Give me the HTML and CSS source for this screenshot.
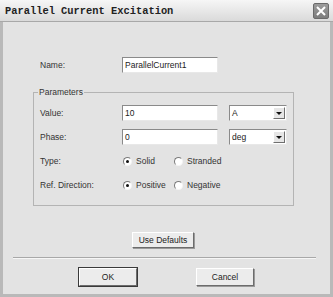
FILE: index.html
```html
<!DOCTYPE html>
<html>
<head>
    <title>Parallel Current Excitation</title>
    <link rel="stylesheet" href="styles.css">
</head>
<body>
    <div class="window">
        <div class="titlebar">
            <span class="title">Parallel Current Excitation</span>
            <span class="close">
                <svg width="10" height="10" viewBox="0 0 10 10">
                    <path d="M1 1 L9 9 M9 1 L1 9" stroke="#ffffff" stroke-width="2"/>
                </svg>
            </span>
        </div>
        <div class="content">
            <div class="row name-row">
                <span class="label">Name:</span>
                <div class="field">ParallelCurrent1</div>
            </div>
            <fieldset class="group">
                <legend>Parameters</legend>
                <div class="row">
                    <span class="label">Value:</span>
                    <div class="field">10</div>
                    <div class="combo"><span>A</span><span class="drop"></span></div>
                </div>
                <div class="row">
                    <span class="label">Phase:</span>
                    <div class="field">0</div>
                    <div class="combo"><span>deg</span><span class="drop"></span></div>
                </div>
                <div class="row">
                    <span class="label">Type:</span>
                    <span class="option"><span class="radio checked"></span>Solid</span>
                    <span class="option"><span class="radio"></span>Stranded</span>
                </div>
                <div class="row">
                    <span class="label">Ref. Direction:</span>
                    <span class="option"><span class="radio checked"></span>Positive</span>
                    <span class="option"><span class="radio"></span>Negative</span>
                </div>
            </fieldset>
            <div class="defaults">
                <div class="btn small">Use Defaults</div>
            </div>
            <div class="separator"></div>
            <div class="buttons">
                <div class="btn default">OK</div>
                <div class="btn">Cancel</div>
            </div>
        </div>
    </div>
</body>
</html>
```

FILE: styles.css
```css
body {
    margin: 0;
    background-color: #e3e3e3;
    font-family: "Liberation Sans", Arial, sans-serif;
    font-size: 8.5px;
    color: #333333;
}
.window {
    width: 333px;
    height: 297px;
    box-sizing: border-box;
    display: flex;
    flex-direction: column;
    background-color: #e3e3e3;
    border: 3px solid #b9b9b9;
    border-top: none;
}
.titlebar {
    height: 22px;
    margin: 0 -3px;
    box-sizing: border-box;
    display: flex;
    align-items: center;
    justify-content: space-between;
    padding: 0 4px 0 5px;
    background: linear-gradient(#f6f6f6, #dadada);
    border-bottom: 1px solid #a8a8a8;
}
.title {
    font-family: "Liberation Mono", "Courier New", monospace;
    font-weight: bold;
    font-size: 10.4px;
    color: #222222;
}
.close {
    width: 16px;
    height: 16px;
    box-sizing: border-box;
    display: flex;
    align-items: center;
    justify-content: center;
    background: linear-gradient(#9c9c9c, #7c7c7c);
    border: 1px solid #6a6a6a;
    border-radius: 2px;
}
.content {
    flex: 1;
    display: flex;
    flex-direction: column;
    padding: 35px 0 0 30px;
}
.row {
    display: flex;
    align-items: center;
    height: 16px;
}
.name-row {
    margin-left: 7px;
}
.label {
    width: 82px;
    flex-shrink: 0;
}
.field {
    width: 96px;
    height: 16px;
    box-sizing: border-box;
    padding: 0 2px;
    line-height: 14px;
    background-color: #ffffff;
    border: 1px solid;
    border-color: #8a8a8a #e8e8e8 #e8e8e8 #8a8a8a;
    color: #222222;
}
.combo {
    width: 58px;
    height: 16px;
    box-sizing: border-box;
    margin-left: 11px;
    display: flex;
    align-items: center;
    justify-content: space-between;
    padding: 0 1px 0 2px;
    background-color: #ffffff;
    border: 1px solid;
    border-color: #8a8a8a #e8e8e8 #e8e8e8 #8a8a8a;
    color: #222222;
}
.drop {
    width: 12px;
    height: 12px;
    box-sizing: border-box;
    position: relative;
    background-color: #e6e6e6;
    border: 1px solid;
    border-color: #ffffff #6f6f6f #6f6f6f #ffffff;
}
.drop::after {
    content: "";
    position: absolute;
    left: 2px;
    top: 4px;
    border-left: 3px solid transparent;
    border-right: 3px solid transparent;
    border-top: 3px solid #111111;
}
.group {
    width: 261px;
    box-sizing: border-box;
    margin: 14px 0 0 0;
    padding: 8px 6px 12px 6px;
    border: 1px solid #b4b4b4;
    display: flex;
    flex-direction: column;
    gap: 8px;
}
.group legend {
    padding: 0 1px;
    line-height: 10px;
    margin-left: -2px;
}
.option {
    width: 51px;
    display: flex;
    align-items: center;
    gap: 4px;
    margin-left: 1px;
}
.option + .option {
    margin-left: 0;
}
.radio {
    width: 9px;
    height: 9px;
    box-sizing: border-box;
    border-radius: 50%;
    background-color: #ffffff;
    border: 1px solid;
    border-color: #7a7a7a #f4f4f4 #f4f4f4 #7a7a7a;
    display: flex;
    align-items: center;
    justify-content: center;
}
.radio.checked::after {
    content: "";
    width: 3px;
    height: 3px;
    border-radius: 50%;
    background-color: #111111;
}
.defaults {
    margin: 26px 0 0 99px;
    display: flex;
}
.btn {
    width: 58px;
    height: 18px;
    box-sizing: border-box;
    display: flex;
    align-items: center;
    justify-content: center;
    background-color: #ececec;
    border: 1px solid;
    border-color: #ffffff #6c6c6c #6c6c6c #ffffff;
    box-shadow: 1px 1px 0 #9a9a9a;
    color: #222222;
}
.btn.small {
    width: 62px;
    height: 16px;
}
.btn.default {
    outline: 1px solid #3a3a3a;
}
.separator {
    margin: 9px 14px 0 -20px;
    height: 1px;
    background-color: #a8a8a8;
    border-bottom: 1px solid #f6f6f6;
}
.buttons {
    margin: 9px 0 0 46px;
    display: flex;
    gap: 59px;
}
```
